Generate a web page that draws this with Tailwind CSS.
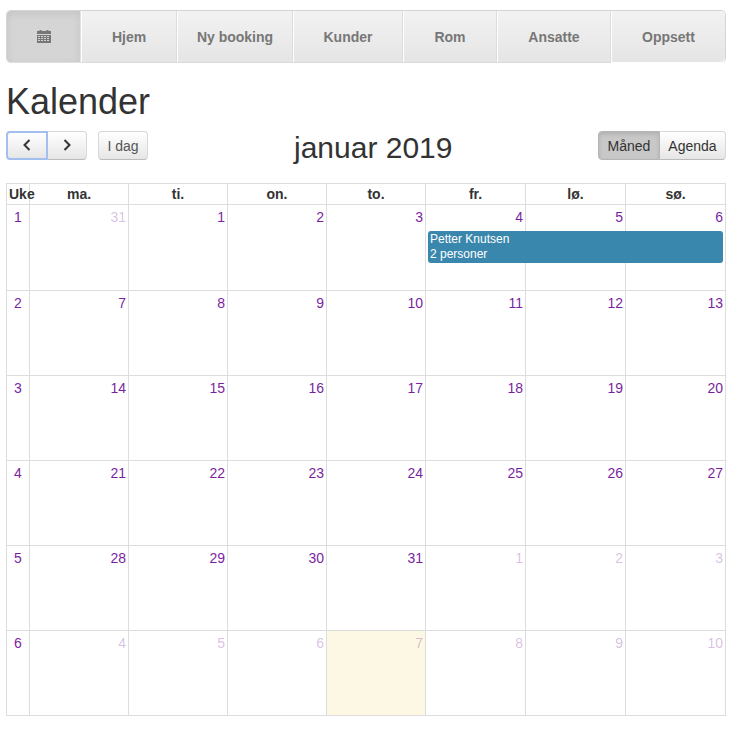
<!DOCTYPE html>
<html><head><meta charset="utf-8"><script src="https://cdn.jsdelivr.net/npm/@tailwindcss/browser@4"></script></head>
<body class="bg-white font-['Liberation_Sans',Arial,sans-serif] text-[14px] text-[#333]">
<div class="w-[740px] h-[734px] overflow-hidden px-[6px] pt-[10px]">
<nav class="flex w-[720px] h-[53px] rounded-[5px] border border-b-0 border-[#d4d4d4] font-bold text-[14px] text-[#777] overflow-hidden">
<a class="flex w-[74px] items-center justify-center bg-[#d5d5d5] shadow-[inset_0_3px_8px_rgba(0,0,0,0.08)] border-r border-[#e0e0e0] border-b">
<svg class="mb-[1px]" width="14" height="14" viewBox="0 0 14 14"><path fill="#777" d="M0 2h2.5V1h2v1h5V1h2v1H14v3H0zM0 6h14v8H0z"/><path fill="#d5d5d5" d="M1 7h2v1H1zm3 0h2v1H4zm3 0h2v1H7zm3 0h2v1h-2zM1 9h2v1H1zm3 0h2v1H4zm3 0h2v1H7zm3 0h2v1h-2zM1 11h2v1H1zm3 0h2v1H4zm3 0h2v1H7zm3 0h2v1h-2z"/></svg></a>
<a class="flex w-[96px] pt-[2px] items-center justify-center bg-gradient-to-b from-[#f2f2f2] to-[#e5e5e5] border-x border-l-white border-r-[#dcdcdc] border-b border-b-[#d9d9d9]">Hjem</a>
<a class="flex w-[116px] pt-[2px] items-center justify-center bg-gradient-to-b from-[#f2f2f2] to-[#e5e5e5] border-x border-l-white border-r-[#dcdcdc] border-b border-b-[#d9d9d9]">Ny booking</a>
<a class="flex w-[110px] pt-[2px] items-center justify-center bg-gradient-to-b from-[#f2f2f2] to-[#e5e5e5] border-x border-l-white border-r-[#dcdcdc] border-b border-b-[#d9d9d9]">Kunder</a>
<a class="flex w-[94px] pt-[2px] items-center justify-center bg-gradient-to-b from-[#f2f2f2] to-[#e5e5e5] border-x border-l-white border-r-[#dcdcdc] border-b border-b-[#d9d9d9]">Rom</a>
<a class="flex w-[114px] pt-[2px] items-center justify-center bg-gradient-to-b from-[#f2f2f2] to-[#e5e5e5] border-x border-l-white border-r-[#dcdcdc] border-b border-b-[#d9d9d9]">Ansatte</a>
<a class="flex flex-1 mb-[1px] pt-[1px] rounded-br-[5px] items-center justify-center bg-gradient-to-b from-[#f2f2f2] to-[#e5e5e5] border-l border-white">Oppsett</a>
</nav>
<h1 class="mt-[19px] h-[40px] text-[36px] leading-[40px] font-normal text-[#333]">Kalender</h1>
<div class="flex w-[720px] items-center justify-between mt-[8px] h-[30px] relative">
<div class="flex items-center">
<button class="flex items-center justify-center w-[42px] h-[29px] rounded-l-[4px] border-2 border-[#a3bff0] bg-gradient-to-b from-white to-[#e6e6e6]"><svg width="14" height="14" viewBox="0 0 14 14"><path d="M9.5 2 4.5 7l5 5" fill="none" stroke="#333" stroke-width="2"/></svg></button>
<button class="flex items-center justify-center w-[39px] h-[29px] rounded-r-[4px] border border-l-0 border-[#d8d8d8] border-b-[#bbb] bg-gradient-to-b from-white to-[#e6e6e6]"><svg width="14" height="14" viewBox="0 0 14 14"><path d="M4.5 2l5 5-5 5" fill="none" stroke="#333" stroke-width="2"/></svg></button>
<button class="ml-[11px] w-[50px] h-[29px] pt-[2px] rounded-[4px] border border-[#d8d8d8] border-b-[#bbb] bg-gradient-to-b from-white to-[#e6e6e6] text-[14px] text-[#555]">I dag</button>
</div>
<div class="absolute left-[288px] top-[1px] text-[30px] leading-[34px] text-[#333]">januar 2019</div>
<div class="flex items-center">
<button class="w-[62px] h-[29px] pt-[2px] rounded-l-[4px] border border-[#b5b5b5] bg-[#c8c8c8] shadow-[inset_0_2px_4px_rgba(0,0,0,0.12)] text-[14px] text-[#333]">Måned</button>
<button class="w-[66px] h-[29px] pt-[2px] rounded-r-[4px] border border-l-0 border-[#d8d8d8] border-b-[#bbb] bg-gradient-to-b from-white to-[#e6e6e6] text-[14px] text-[#333]">Agenda</button>
</div>
</div>
<div class="mt-[23px] w-[720px] grid grid-cols-[23px_repeat(4,99px)_repeat(3,100px)] grid-rows-[21px_86px_repeat(5,85px)] border-l border-t border-[#ddd] [&>div]:border-r [&>div]:border-b [&>div]:border-[#ddd]">
<div class="font-bold text-center text-[#333] whitespace-nowrap leading-[21px] overflow-visible"><span class="relative left-[2px] z-10">Uke</span></div><div class="font-bold text-center leading-[21px]">ma.</div><div class="font-bold text-center leading-[21px]">ti.</div><div class="font-bold text-center leading-[21px]">on.</div><div class="font-bold text-center leading-[21px]">to.</div><div class="font-bold text-center leading-[21px]">fr.</div><div class="font-bold text-center leading-[21px]">lø.</div><div class="font-bold text-center leading-[21px]">sø.</div>

<div class="text-center pt-[2px] leading-[20px] text-[#7b1fa2]">1</div><div class="text-right pr-[2px] leading-[20px] pt-[2px] text-[#7b1fa2]/30">31</div><div class="text-right pr-[2px] leading-[20px] pt-[2px] text-[#7b1fa2]">1</div><div class="text-right pr-[2px] leading-[20px] pt-[2px] text-[#7b1fa2]">2</div><div class="text-right pr-[2px] leading-[20px] pt-[2px] text-[#7b1fa2]">3</div>
<div class="relative text-right pr-[2px] leading-[20px] pt-[2px] text-[#7b1fa2]">4<div class="absolute left-[2px] top-[26px] w-[295px] h-[32px] rounded-[3px] bg-[#3a87ad] px-[2px] pt-[1px] text-left text-[12px] leading-[15px] text-white">Petter Knutsen<br>2 personer</div></div>
<div class="text-right pr-[2px] leading-[20px] pt-[2px] text-[#7b1fa2]">5</div><div class="text-right pr-[2px] leading-[20px] pt-[2px] text-[#7b1fa2]">6</div>

<div class="text-center pt-[2px] leading-[20px] text-[#7b1fa2]">2</div><div class="text-right pr-[2px] leading-[20px] pt-[2px] text-[#7b1fa2]">7</div><div class="text-right pr-[2px] leading-[20px] pt-[2px] text-[#7b1fa2]">8</div><div class="text-right pr-[2px] leading-[20px] pt-[2px] text-[#7b1fa2]">9</div><div class="text-right pr-[2px] leading-[20px] pt-[2px] text-[#7b1fa2]">10</div><div class="text-right pr-[2px] leading-[20px] pt-[2px] text-[#7b1fa2]">11</div><div class="text-right pr-[2px] leading-[20px] pt-[2px] text-[#7b1fa2]">12</div><div class="text-right pr-[2px] leading-[20px] pt-[2px] text-[#7b1fa2]">13</div>

<div class="text-center pt-[2px] leading-[20px] text-[#7b1fa2]">3</div><div class="text-right pr-[2px] leading-[20px] pt-[2px] text-[#7b1fa2]">14</div><div class="text-right pr-[2px] leading-[20px] pt-[2px] text-[#7b1fa2]">15</div><div class="text-right pr-[2px] leading-[20px] pt-[2px] text-[#7b1fa2]">16</div><div class="text-right pr-[2px] leading-[20px] pt-[2px] text-[#7b1fa2]">17</div><div class="text-right pr-[2px] leading-[20px] pt-[2px] text-[#7b1fa2]">18</div><div class="text-right pr-[2px] leading-[20px] pt-[2px] text-[#7b1fa2]">19</div><div class="text-right pr-[2px] leading-[20px] pt-[2px] text-[#7b1fa2]">20</div>

<div class="text-center pt-[2px] leading-[20px] text-[#7b1fa2]">4</div><div class="text-right pr-[2px] leading-[20px] pt-[2px] text-[#7b1fa2]">21</div><div class="text-right pr-[2px] leading-[20px] pt-[2px] text-[#7b1fa2]">22</div><div class="text-right pr-[2px] leading-[20px] pt-[2px] text-[#7b1fa2]">23</div><div class="text-right pr-[2px] leading-[20px] pt-[2px] text-[#7b1fa2]">24</div><div class="text-right pr-[2px] leading-[20px] pt-[2px] text-[#7b1fa2]">25</div><div class="text-right pr-[2px] leading-[20px] pt-[2px] text-[#7b1fa2]">26</div><div class="text-right pr-[2px] leading-[20px] pt-[2px] text-[#7b1fa2]">27</div>

<div class="text-center pt-[2px] leading-[20px] text-[#7b1fa2]">5</div><div class="text-right pr-[2px] leading-[20px] pt-[2px] text-[#7b1fa2]">28</div><div class="text-right pr-[2px] leading-[20px] pt-[2px] text-[#7b1fa2]">29</div><div class="text-right pr-[2px] leading-[20px] pt-[2px] text-[#7b1fa2]">30</div><div class="text-right pr-[2px] leading-[20px] pt-[2px] text-[#7b1fa2]">31</div><div class="text-right pr-[2px] leading-[20px] pt-[2px] text-[#7b1fa2]/30">1</div><div class="text-right pr-[2px] leading-[20px] pt-[2px] text-[#7b1fa2]/30">2</div><div class="text-right pr-[2px] leading-[20px] pt-[2px] text-[#7b1fa2]/30">3</div>

<div class="text-center pt-[2px] leading-[20px] text-[#7b1fa2]">6</div><div class="text-right pr-[2px] leading-[20px] pt-[2px] text-[#7b1fa2]/30">4</div><div class="text-right pr-[2px] leading-[20px] pt-[2px] text-[#7b1fa2]/30">5</div><div class="text-right pr-[2px] leading-[20px] pt-[2px] text-[#7b1fa2]/30">6</div><div class="text-right pr-[2px] leading-[20px] pt-[2px] text-[#7b1fa2]/30 bg-[#fcf8e3]">7</div><div class="text-right pr-[2px] leading-[20px] pt-[2px] text-[#7b1fa2]/30">8</div><div class="text-right pr-[2px] leading-[20px] pt-[2px] text-[#7b1fa2]/30">9</div><div class="text-right pr-[2px] leading-[20px] pt-[2px] text-[#7b1fa2]/30">10</div>
</div>
</div>
</body></html>
